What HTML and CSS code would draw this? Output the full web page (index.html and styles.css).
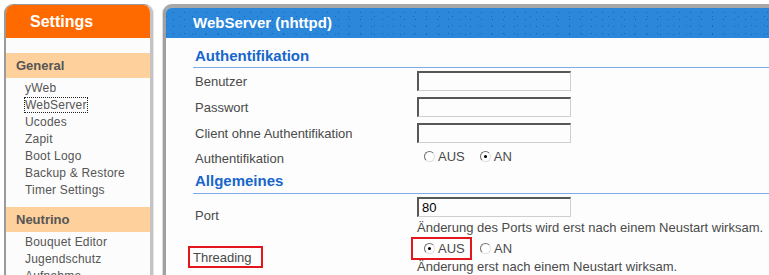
FILE: index.html
```html
<!DOCTYPE html>
<html lang="de">
<head>
  <meta charset="UTF-8" />
  <title>yWeb - WebServer</title>
  <link rel="stylesheet" href="styles.css">
</head>
<body>
  <div class="page">
    <div class="sidebar">
      <div class="sidebar-head">Settings</div>
      <div class="sidebar-body">
        <div class="group">General</div>
        <ul class="links">
          <li><a>yWeb</a></li>
          <li><a class="focus">WebServer</a></li>
          <li><a>Ucodes</a></li>
          <li><a>Zapit</a></li>
          <li><a>Boot Logo</a></li>
          <li><a>Backup &amp; Restore</a></li>
          <li><a>Timer Settings</a></li>
        </ul>
        <div class="group">Neutrino</div>
        <ul class="links">
          <li><a>Bouquet Editor</a></li>
          <li><a>Jugendschutz</a></li>
          <li><a>Aufnahme</a></li>
        </ul>
      </div>
    </div>

    <div class="main">
      <div class="main-head">WebServer (nhttpd)</div>
      <div class="main-body">
        <h2 class="first">Authentifikation</h2>
        <table class="form">
          <tr class="row">
            <td class="label">Benutzer</td>
            <td><input class="field" type="text" /></td>
          </tr>
          <tr class="row">
            <td class="label">Passwort</td>
            <td><input class="field" type="text" /></td>
          </tr>
          <tr class="row">
            <td class="label">Client ohne Authentifikation</td>
            <td><input class="field" type="text" /></td>
          </tr>
          <tr class="row-radio">
            <td class="label">Authentifikation</td>
            <td>
              <div class="choices">
                <span class="radio"></span><span class="opt">AUS</span>
                <span class="radio checked"></span><span class="opt">AN</span>
              </div>
            </td>
          </tr>
        </table>

        <h2 class="second">Allgemeines</h2>
        <table class="form">
          <tr class="row-help">
            <td class="label">Port</td>
            <td>
              <input class="field" type="text" value="80" />
              <div class="help">Änderung des Ports wird erst nach einem Neustart wirksam.</div>
            </td>
          </tr>
          <tr class="row-help">
            <td class="label label-top"><span class="marked">Threading</span></td>
            <td>
              <div class="choices marked-choices">
                <span class="radio checked"></span><span class="opt">AUS</span>
              </div><div class="choices inline">
                <span class="radio"></span><span class="opt">AN</span>
              </div>
              <div class="help help-last">Änderung erst nach einem Neustart wirksam.</div>
            </td>
          </tr>
        </table>
      </div>
    </div>
  </div>
</body>
</html>
```

FILE: styles.css
```css
* {
  box-sizing: border-box;
}
html, body {
  height: 100%;
}
body {
  margin: 0;
  background: #fff;
  font-family: "Liberation Sans", Arial, sans-serif;
  font-size: 13px;
  color: #4a4a4a;
  overflow: hidden;
}
.page {
  display: flex;
  align-items: flex-start;
  padding: 4px 0 0 4px;
}

/* sidebar */
.sidebar {
  width: 149px;
  height: 300px;
  flex: none;
  background: #fcfcfc;
  border: 1px solid #9a9a9a;
  border-width: 1px 3px 0 2px;
  border-right-color: #c4c4c4;
  border-radius: 9px 9px 0 0;
  overflow: hidden;
  box-shadow: 1px 0 0 #e4e4e4;
}
.sidebar-head {
  height: 33px;
  background: #fe6a00;
  color: #fff;
  font-size: 16px;
  font-weight: bold;
  line-height: 33px;
  padding-left: 24px;
}
.sidebar-body {
  padding-top: 15px;
}
.group {
  height: 25px;
  line-height: 26px;
  background: #fdd09c;
  color: #555;
  font-size: 13px;
  font-weight: bold;
  padding-left: 10px;
}
.links {
  list-style: none;
  margin: 2px 0 8px;
  padding: 0;
}
.links li {
  height: 17px;
  line-height: 17px;
  padding-left: 19px;
  font-size: 12px;
  letter-spacing: 0.2px;
}
.links a {
  color: #555;
}
.links a.focus {
  outline: 1px dotted #222;
  outline-offset: 0;
}

/* main panel */
.main {
  flex: 1;
  margin-left: 10px;
  height: 300px;
  background: #fcfdfc;
  border-top: 4px solid #a8a8a8;
  border-left: 3px solid #a0a0a0;
  border-radius: 9px 0 0 0;
  overflow: hidden;
  box-shadow: -1px 0 0 #dcdcdc;
}
.main-head {
  height: 30px;
  line-height: 30px;
  padding-left: 27px;
  color: #fff;
  font-size: 15px;
  font-weight: bold;
  background-color: #2a87da;
  background-image:
    radial-gradient(circle, #1a60b8 0.7px, transparent 1px),
    radial-gradient(circle, #1d66bd 0.7px, transparent 1px);
  background-size: 11px 7px, 13px 9px;
  background-position: 2px 1px, 7px 4px;
}
.main-body {
  padding-left: 27px;
}
h2 {
  margin: 0;
  color: #1766cc;
  font-size: 15px;
  font-weight: bold;
  line-height: 20px;
  padding-left: 2px;
  border-bottom: 1px solid #7eaae8;
}
h2.first {
  height: 30px;
  padding-top: 8px;
}
h2.second {
  height: 24px;
  padding-top: 1px;
}

/* form rows */
.form {
  border-collapse: collapse;
}
.form td {
  padding: 0;
  vertical-align: top;
}
.form td.label {
  width: 224px;
  padding-left: 2px;
  vertical-align: middle;
}
.form td.label-top {
  vertical-align: top;
}
.row td {
  height: 26px;
}
.row-radio td {
  height: 24px;
}
.field {
  display: block;
  width: 154px;
  height: 20px;
  margin-top: 3px;
  padding: 0 3px;
  font: 13px "Liberation Sans", Arial, sans-serif;
  color: #000;
  background: #fdfdfd;
  border-style: solid;
  border-width: 2px 1px 1px 2px;
  border-color: #575757 #cfcfcf #cfcfcf #575757;
}
.help {
  line-height: 16px;
  margin-top: 3px;
  white-space: nowrap;
}
.help-last {
  line-height: 13px;
  margin-top: 0;
}
.choices {
  display: flex;
  align-items: center;
  padding-left: 7px;
  height: 20px;
}
.choices.inline {
  display: inline-flex;
  padding-left: 8px;
  vertical-align: top;
  margin-top: 2px;
}
.radio {
  width: 11px;
  height: 11px;
  border-radius: 50%;
  border: 1px solid;
  border-color: #707070 #e0e0e0 #e0e0e0 #707070;
  background: #fff;
  position: relative;
  margin-right: 3px;
}
.radio.checked::after {
  content: "";
  position: absolute;
  left: 3px;
  top: 3px;
  width: 3px;
  height: 3px;
  border-radius: 50%;
  background: #000;
}
.opt {
  margin-right: 15px;
}
.marked {
  display: inline-block;
  margin: 10px 0 0 -7px;
  padding: 1px 9px 0 3px;
  height: 22px;
  line-height: 18px;
  border: 2px solid #e4151b;
}
.marked-choices {
  display: inline-flex;
  margin-left: -6px;
  margin-top: 1px;
  padding: 0 0 0 11px;
  width: 61px;
  height: 23px;
  border: 2px solid #e4151b;
  vertical-align: top;
}
.marked-choices .opt {
  margin-right: 0;
}
```
